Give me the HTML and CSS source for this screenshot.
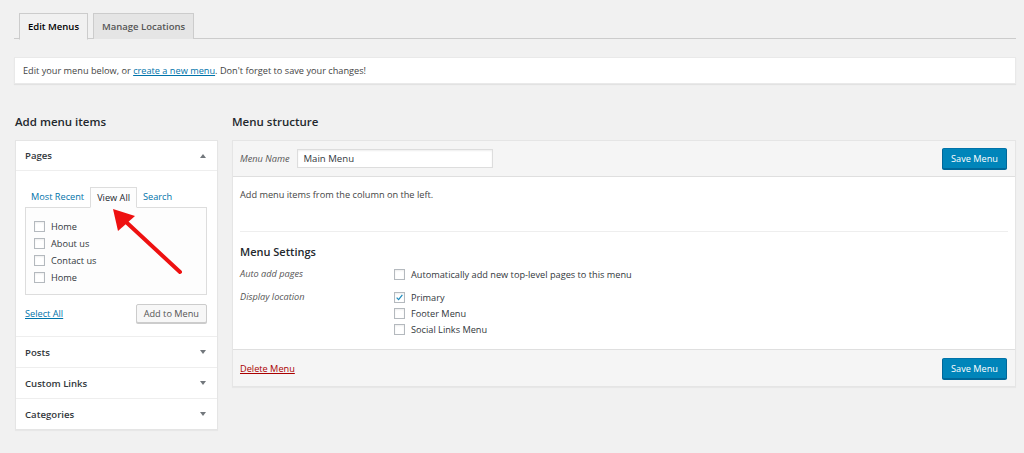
FILE: index.html
```html
<!DOCTYPE html>
<html>
<head>
<meta charset="utf-8">
<link rel="stylesheet" href="styles.css">
</head>
<body>
<div class="wrap">
  <div class="nav-tabs">
    <span class="nav-tab active">Edit Menus</span>
    <span class="nav-tab">Manage Locations</span>
  </div>
  <div class="notice"><p>Edit your menu below, or <a href="#">create a new menu</a>. Don't forget to save your changes!</p></div>

  <div class="columns">
    <div class="col-left">
      <h2 class="col-title">Add menu items</h2>
      <div class="accordion">
        <div class="acc-section open">
          <div class="acc-head"><span>Pages</span><span class="tri up"></span></div>
          <div class="acc-body">
            <div class="inner-tabs">
              <span class="itab">Most Recent</span>
              <span class="itab active">View All</span>
              <span class="itab">Search</span>
            </div>
            <div class="list-box">
              <label class="item"><span class="cb"></span>Home</label>
              <label class="item"><span class="cb"></span>About us</label>
              <label class="item"><span class="cb"></span>Contact us</label>
              <label class="item"><span class="cb"></span>Home</label>
            </div>
            <div class="acc-actions">
              <a href="#" class="select-all">Select All</a>
              <span class="btn">Add to Menu</span>
            </div>
          </div>
        </div>
        <div class="acc-section"><div class="acc-head"><span>Posts</span><span class="tri"></span></div></div>
        <div class="acc-section"><div class="acc-head"><span>Custom Links</span><span class="tri"></span></div></div>
        <div class="acc-section"><div class="acc-head"><span>Categories</span><span class="tri"></span></div></div>
      </div>
    </div>

    <div class="col-right">
      <h2 class="col-title">Menu structure</h2>
      <div class="menu-box">
        <div class="menu-head">
          <div class="name-field"><span class="lbl">Menu Name</span><span class="input">Main Menu</span></div>
          <span class="btn primary">Save Menu</span>
        </div>
        <div class="menu-body">
          <p class="hint">Add menu items from the column on the left.</p>
          <div class="settings">
            <h3>Menu Settings</h3>
            <div class="set-row">
              <span class="set-lbl">Auto add pages</span>
              <div class="set-opts">
                <label class="opt"><span class="cb"></span>Automatically add new top-level pages to this menu</label>
              </div>
            </div>
            <div class="set-row">
              <span class="set-lbl">Display location</span>
              <div class="set-opts">
                <label class="opt"><span class="cb checked"><svg viewBox="0 0 12 12" width="12" height="12"><path d="M2.2 6.2 L4.8 8.8 L9.8 2.4" fill="none" stroke="#1e8cbe" stroke-width="1.7"/></svg></span>Primary</label>
                <label class="opt"><span class="cb"></span>Footer Menu</label>
                <label class="opt"><span class="cb"></span>Social Links Menu</label>
              </div>
            </div>
          </div>
        </div>
        <div class="menu-foot">
          <a href="#" class="delete">Delete Menu</a>
          <span class="btn primary">Save Menu</span>
        </div>
      </div>
    </div>
  </div>
</div>
<svg class="arrow" width="90" height="80" viewBox="0 0 90 80">
  <line x1="75" y1="71" x2="20" y2="20" stroke="#ee1111" stroke-width="4" stroke-linecap="round"/>
  <polygon points="8,8 30,15 13,30" fill="#ee1111"/>
</svg>
</body>
</html>
```
FILE: styles.css
```css
* { box-sizing: border-box; }
html, body { margin: 0; padding: 0; }
body {
  background: #f1f1f1;
  font-family: "Open Sans", "Noto Sans", sans-serif;
  font-size: 9.2px;
  color: #23282d;
  width: 1024px;
  height: 453px;
  overflow: hidden;
  position: relative;
}
a { color: #0073aa; text-decoration: underline; }
.wrap { padding: 13px 8px 0 14px; }

.nav-tabs {
  display: flex;
  gap: 5px;
  padding-left: 5px;
  border-bottom: 1px solid #ccc;
  height: 26px;
}
.nav-tab {
  height: 26px;
  border: 1px solid #ccc;
  border-bottom: none;
  background: #e5e5e5;
  color: #555;
  font-weight: 600;
  font-size: 9.5px;
  padding: 0 8px;
  display: flex;
  align-items: center;
  white-space: nowrap;
}
.nav-tab.active {
  background: #f1f1f1;
  color: #000;
  margin-bottom: -1px;
  border-bottom: 1px solid #f1f1f1;
  height: 27px;
}

.notice {
  margin-top: 18px;
  background: #fff;
  height: 27px;
  padding-left: 8px;
  box-shadow: 0 1px 1px rgba(0,0,0,0.06);
  border: 1px solid #e9e9e9;
  color: #444;
}
.notice p { margin: 0; line-height: 25px; }

.columns {
  display: flex;
  gap: 14px;
  margin-top: 29px;
}
.col-left { width: 203px; margin-left: 1px; }
.col-right { flex: 1; }
.col-title {
  font-size: 11.5px;
  font-weight: 600;
  margin: 0 0 9px;
  height: 18px;
  line-height: 18px;
  color: #23282d;
}

.accordion {
  background: #fff;
  border: 1px solid #e5e5e5;
  box-shadow: 0 1px 1px rgba(0,0,0,0.04);
}
.acc-section { border-top: 1px solid #eee; }
.acc-section:first-child { border-top: none; }
.acc-head {
  height: 30px;
  display: flex;
  align-items: center;
  justify-content: space-between;
  padding: 0 11px 0 9px;
  font-size: 9.6px;
  font-weight: 600;
  color: #32373c;
}
.open .acc-head { border-bottom: 1px solid #eee; height: 30px; }
.tri {
  width: 0; height: 0;
  border-left: 3.5px solid transparent;
  border-right: 3.5px solid transparent;
  border-top: 4px solid #72777c;
}
.tri.up { border-top: none; border-bottom: 4px solid #72777c; }

.acc-body { padding: 16px 10px 13px 9px; }
.inner-tabs {
  display: flex;
  align-items: flex-end;
  height: 20px;
  padding-left: 6px;
  gap: 6px;
}
.itab {
  color: #0073aa;
  height: 20px;
  line-height: 19px;
  white-space: nowrap;
}
.itab.active {
  color: #23282d;
  border: 1px solid #ddd;
  border-bottom: 1px solid #fdfdfd;
  background: #fdfdfd;
  padding: 0 6px;
  margin-bottom: -1px;
  height: 21px;
  position: relative;
  z-index: 1;
}
.list-box {
  border: 1px solid #ddd;
  background: #fdfdfd;
  height: 88px;
  padding: 13px 8px 0 8px;
  display: flex;
  flex-direction: column;
  gap: 6px;
}
.item {
  display: flex;
  align-items: center;
  gap: 6px;
  height: 11px;
  color: #32373c;
}
.cb {
  width: 11px;
  height: 11px;
  border: 1px solid #b4b9be;
  background: #fff;
  box-shadow: inset 0 1px 2px rgba(0,0,0,0.07);
  display: inline-flex;
  align-items: center;
  justify-content: center;
  flex: none;
}
.cb svg { display: block; width: 11px; height: 11px; }
.acc-actions {
  display: flex;
  justify-content: space-between;
  align-items: center;
  margin-top: 9px;
}
.btn {
  display: inline-flex;
  align-items: center;
  justify-content: center;
  height: 19px;
  padding: 0 7px;
  border: 1px solid #ccc;
  background: #f7f7f7;
  color: #555;
  border-radius: 2px;
  box-shadow: 0 1px 0 #ccc;
  white-space: nowrap;
}
.btn.primary {
  background: #0085ba;
  border-color: #0073aa #006799 #006799;
  box-shadow: 0 1px 0 #006799;
  color: #fff;
  height: 21px;
  width: 65px;
  padding: 0;
}

.menu-box {
  border: 1px solid #e5e5e5;
  box-shadow: 0 1px 1px rgba(0,0,0,0.04);
  background: #fff;
}
.menu-head {
  background: #f5f5f5;
  height: 36px;
  border-bottom: 1px solid #dfdfdf;
  display: flex;
  align-items: center;
  justify-content: space-between;
  padding: 0 8px 0 7px;
}
.name-field { display: flex; align-items: center; gap: 8px; }
.lbl { font-style: italic; color: #555; }
.input {
  width: 196px;
  height: 19px;
  border: 1px solid #ddd;
  background: #fff;
  box-shadow: inset 0 1px 2px rgba(0,0,0,0.07);
  padding-left: 5px;
  display: flex;
  align-items: center;
  font-size: 9.6px;
  color: #32373c;
}
.menu-body { padding: 0 7px 13px; }
.hint { margin: 0; height: 54px; padding-top: 11px; line-height: 14px; color: #444; }
.settings { border-top: 1px solid #eee; padding-top: 12px; }
.settings h3 {
  margin: 0 0 7px;
  font-size: 11px;
  font-weight: 600;
  line-height: 16px;
  color: #23282d;
}
.set-row { display: flex; margin-bottom: 9px; }
.set-row:last-child { margin-bottom: 0; }
.set-lbl { width: 154px; font-style: italic; color: #555; line-height: 14px; }
.set-opts { display: flex; flex-direction: column; gap: 2px; }
.opt { display: flex; align-items: center; gap: 6px; height: 14px; color: #32373c; }

.menu-foot {
  background: #f5f5f5;
  border-top: 1px solid #dfdfdf;
  height: 37px;
  display: flex;
  align-items: center;
  justify-content: space-between;
  padding: 0 8px 0 7px;
}
.delete { color: #a00; }

.arrow {
  position: absolute;
  left: 105px;
  top: 201px;
}
```
